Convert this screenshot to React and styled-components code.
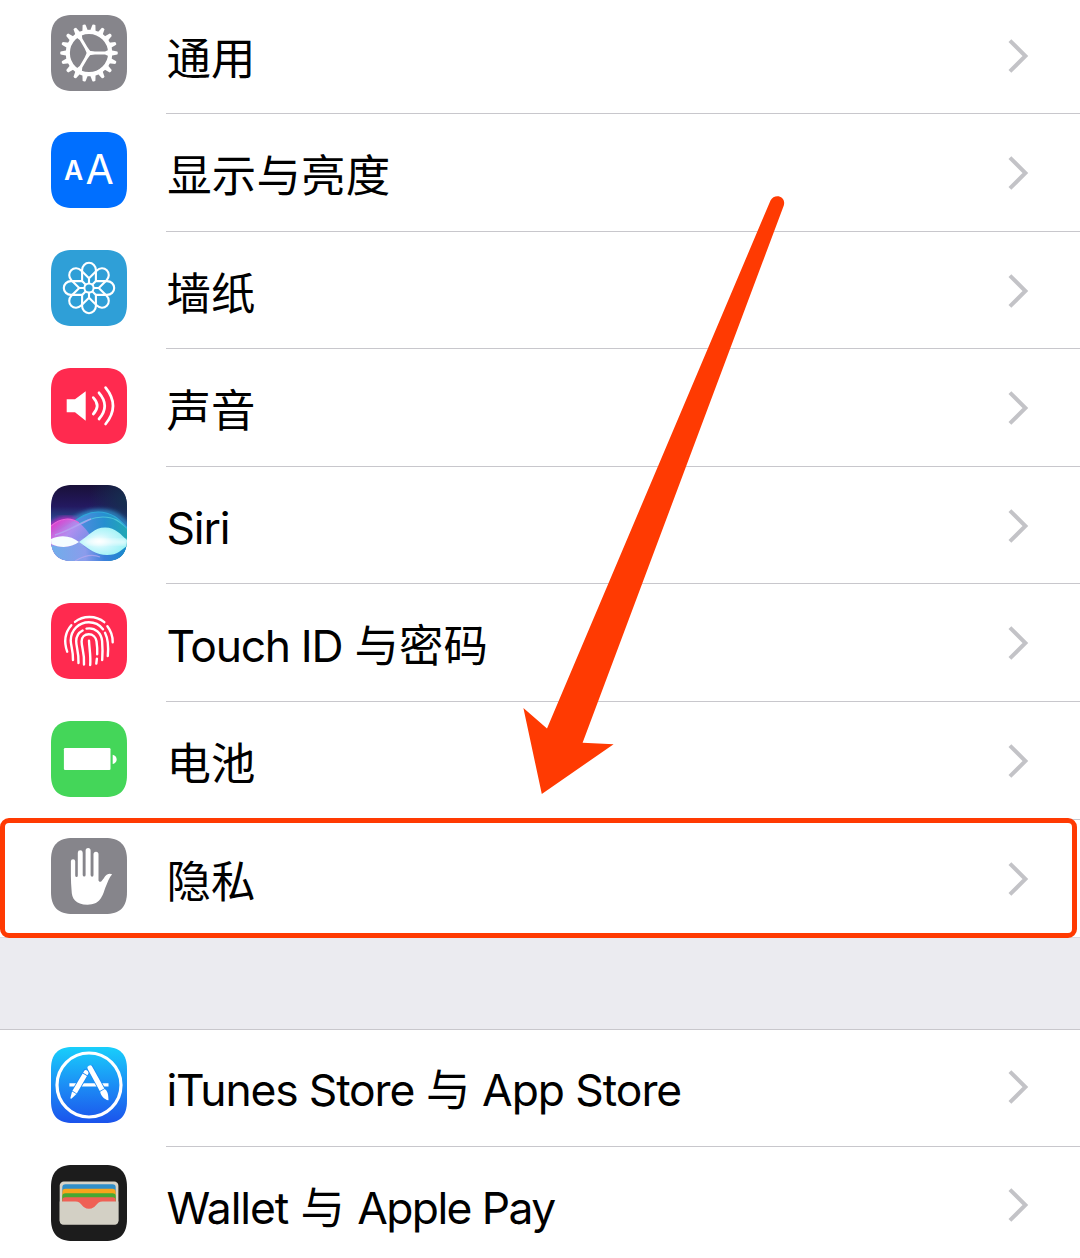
import React from "react";
import styled, { createGlobalStyle } from "styled-components";

const GlobalStyle = createGlobalStyle`
  * { box-sizing: border-box; }
  body {
    margin: 0;
    background: #fff;
    font-family: Inter, "Noto Sans CJK SC", sans-serif;
  }
`;

const Screen = styled.main`
  position: relative;
  width: 1080px;
  height: 1258px;
  overflow: hidden;
  display: flex;
  flex-direction: column;
  background: #fff;
`;

const Group = styled.section`
  display: flex;
  flex-direction: column;
  flex: none;
  margin-top: ${(p) => p.$shift || 0}px;
`;

const Spacer = styled.div`
  flex: none;
  height: 92.6px;
  background: #ebebf0;
  border-top: 1px solid #dcdbe0;
  border-bottom: 1px solid #c8c7cc;
`;

const Row = styled.div`
  position: relative;
  display: flex;
  align-items: flex-start;
  height: 117.6px;
  padding-left: 51.3px;
`;

const IconSlot = styled.div`
  flex: none;
  width: 76px;
  height: 76px;
  margin-top: ${(p) => p.$top}px;
`;

const Body = styled.div`
  flex: 1;
  display: flex;
  align-items: center;
  height: 117.6px;
  margin-left: 39.2px;
  padding-right: 51px;
  padding-bottom: ${(p) => p.$rise}px;
  border-bottom: 1px solid ${(p) => (p.$last ? "transparent" : "#c8c7cc")};
`;

const Label = styled.span`
  flex: 1;
  padding-top: 5px;
  font-size: 44.4px;
  line-height: 60px;
  color: #000;
  white-space: pre;
`;

const Latin = styled.span`
  letter-spacing: ${(p) => p.$track}px;
  padding-left: ${(p) => p.$lead || 0}px;
`;

const Han = styled.span`
  font-family: "Noto Sans CJK SC", sans-serif;
  letter-spacing: 0.2px;
  padding-left: ${(p) => p.$lead || 0}px;
`;

const Chevron = styled.svg`
  flex: none;
  width: 21px;
  height: 36px;
  margin-top: 2px;
`;

const Highlight = styled.div`
  position: absolute;
  left: 0;
  top: -2px;
  width: 1077px;
  height: 120px;
  border: 5px solid #ff3a02;
  border-radius: 9px;
`;

const ArrowMark = styled.svg`
  position: absolute;
  left: 0;
  top: 0;
  width: 1080px;
  height: 1258px;
  pointer-events: none;
`;

function Tile({ fill, children }) {
  return (
    <svg width="76" height="76" viewBox="0 0 76 76" fill="none">
      <path
        d="M22 0H54C69 0 76 7 76 22V54C76 69 69 76 54 76H22C7 76 0 69 0 54V22C0 7 7 0 22 0Z"
        fill={fill}
      />
      {children}
    </svg>
  );
}

function GearIcon() {
  const teeth = Array.from({ length: 18 }, (_, i) => (i * 360) / 18);
  return (
    <Tile fill="#86858b">
      <g transform="translate(38 38)" fill="#fff">
        {teeth.map((a) => (
          <path key={a} d="M22-2.8L28.4-1.5Q29.4 0 28.4 1.5L22 2.8Z" transform={`rotate(${a})`} />
        ))}
        <circle r="21.2" fill="none" stroke="#fff" strokeWidth="4.2" />
        {[0, 120, 240].map((a) => (
          <path key={a} d="M0-2.2L6-1.5H16L20-3.2V3.2L16 1.5H6L0 2.2Z" transform={`rotate(${a})`} />
        ))}
      </g>
    </Tile>
  );
}

const Glyph = styled.text`
  font-family: Inter, sans-serif;
  font-size: ${(p) => p.$size}px;
  font-weight: ${(p) => p.$weight};
  fill: #fff;
`;

function DisplayIcon() {
  return (
    <Tile fill="#006fff">
      <Glyph x="13" y="48.2" $size={26.4} $weight={600}>A</Glyph>
      <Glyph x="34.4" y="51.8" $size={41} $weight={400}>A</Glyph>
    </Tile>
  );
}

function WallpaperIcon() {
  return (
    <Tile fill="#2f9fd7">
      <g transform="translate(38 38)" stroke="#fff" strokeWidth="2.1" strokeLinejoin="round">
        {[0, 45, 90, 135, 180, 225, 270, 315].map((a) => (
          <path
            key={a}
            d="M-3.2-3.2L-6.9-6.9V-18A6.9 7.2 0 0 1 6.9-18V-6.9"
            transform={`rotate(${a})`}
          />
        ))}
        <circle r="4.6" fill="#2f9fd7" strokeWidth="2" />
      </g>
    </Tile>
  );
}

function SoundIcon() {
  return (
    <Tile fill="#ff2a4f">
      <path d="M15.7 31.3H24L34.7 23.3V52.7L24 44.2H15.7Z" fill="#fff" />
      <g stroke="#fff" strokeWidth="2.7" strokeLinecap="round">
        <path d="M42.3 29.6Q50 37.8 42.3 46" />
        <path d="M48 24.8Q59.4 37.8 48 51" />
        <path d="M54.6 19.6Q69.4 37.8 54.6 56" />
      </g>
    </Tile>
  );
}

function SiriIcon() {
  return (
    <svg width="76" height="76" viewBox="0 0 76 76" fill="none">
      <defs>
        <clipPath id="siriClip">
          <path d="M22 0H54C69 0 76 7 76 22V54C76 69 69 76 54 76H22C7 76 0 69 0 54V22C0 7 7 0 22 0Z" />
        </clipPath>
        <linearGradient id="siriSky" x1="0" y1="0" x2="0" y2="1">
          <stop offset="0" stopColor="#191038" />
          <stop offset="0.28" stopColor="#231960" />
          <stop offset="0.5" stopColor="#2b559c" />
        </linearGradient>
        <linearGradient id="siriSea" x1="0" y1="0" x2="1" y2="0">
          <stop offset="0" stopColor="#a06ae0" />
          <stop offset="0.35" stopColor="#548be0" />
          <stop offset="0.7" stopColor="#268fd0" />
          <stop offset="1" stopColor="#20a8b4" />
        </linearGradient>
        <linearGradient id="siriDeep" x1="0" y1="0" x2="1" y2="0">
          <stop offset="0" stopColor="#6faeea" />
          <stop offset="0.45" stopColor="#8b9cec" />
          <stop offset="0.7" stopColor="#3b80db" />
          <stop offset="1" stopColor="#1689cc" />
        </linearGradient>
        <linearGradient id="siriPink" x1="0" y1="34" x2="35" y2="70" gradientUnits="userSpaceOnUse">
          <stop offset="0" stopColor="#e52bc5" />
          <stop offset="0.45" stopColor="#c092f3" stopOpacity="0.8" />
          <stop offset="1" stopColor="#a18df0" stopOpacity="0.4" />
        </linearGradient>
        <radialGradient id="siriLens" cx="0.42" cy="0.5" r="0.6">
          <stop offset="0" stopColor="#fff" />
          <stop offset="0.45" stopColor="#c9f7fc" />
          <stop offset="1" stopColor="#9cf2f5" />
        </radialGradient>
        <radialGradient id="siriShade" cx="1" cy="0.2" r="0.5">
          <stop offset="0" stopColor="#15304f" />
          <stop offset="1" stopColor="#15304f" stopOpacity="0" />
        </radialGradient>
        <filter id="siriGlow" x="-20%" y="-50%" width="140%" height="200%">
          <feGaussianBlur stdDeviation="2" />
        </filter>
      </defs>
      <g clipPath="url(#siriClip)">
        <rect width="76" height="76" fill="url(#siriSky)" />
        <rect width="76" height="76" fill="url(#siriShade)" />
        <path d="M-2 46C15 46 26 27 47 27S69 34 79 44" stroke="#2d8cc8" strokeWidth="5" filter="url(#siriGlow)" />
        <path d="M-2 43C8 33 17 33 26 37" stroke="#b32cc0" strokeWidth="6" filter="url(#siriGlow)" />
        <path d="M0 48C17 46 28 27 47 27C61 27 68 34 76 43V76H0Z" fill="url(#siriSea)" />
        <path d="M0 51C19 46 34 32 52 32C63 32 68 36 76 43" stroke="#5ad6df" strokeWidth="1.2" opacity="0.7" />
        <path d="M0 48C17 46 28 27 47 27C61 27 68 34 76 43" stroke="#30a7d9" strokeWidth="1.2" />
        <path d="M0 41C9 33 20 32 28 38C38 45 44 57 50 76H0Z" fill="url(#siriPink)" />
        <path d="M0 41C9 33 20 32 28 38" stroke="#e666da" strokeWidth="1.2" />
        <path d="M4 50C18 46 28 39 40 34" stroke="#b6a5f2" strokeWidth="1.4" opacity="0.8" />
        <path d="M0 60C12 63 20 63 28 57C36 65 47 71 57 70S71 65 76 61V76H0Z" fill="url(#siriDeep)" />
        <path d="M24 76C34 70 42 69 49 72" stroke="#b9a9ef" strokeWidth="1.2" opacity="0.7" />
        <path d="M0 54C10 49 21 51 28 57C21 62 11 64 0 59Z" fill="#f5fdff" />
        <path d="M28 57C39 50 43 42.5 54 42.5C65 42.5 70 50 76 55V61C70 65 67 70 56 70C45 70 38 64 28 57Z" fill="url(#siriLens)" />
        <path d="M30 56.8C48 53 58 57 76 55V59C59 57 48 60 30 57.2Z" fill="#fff" filter="url(#siriGlow)" />
      </g>
    </svg>
  );
}

function TouchIdIcon() {
  return (
    <Tile fill="#ff2a4f">
      <g stroke="#fff" strokeWidth="2.4" strokeLinecap="round">
        <path d="M24 18.9C32 12.3 45 12.3 53.3 19.2" />
        <path d="M20.3 22.2C14 29.5 12.8 39 16.2 48.7" />
        <path d="M56.4 23.3C60 28 61.8 33 61.7 39.2" />
        <path d="M22 57C22.3 48 19.8 43 19.7 37.5C19.9 27 28 19.3 37.8 19.3C44.5 19.3 49 22.4 52 26.2" />
        <path d="M54 29.8C57.2 36 57.5 45 56.8 53" />
        <path d="M27.5 60C27.9 49 25.2 44.5 25.2 38.3C25.2 34 27.5 29.6 31.6 27.5" />
        <path d="M35.5 25.6C44.5 24 50.4 30.5 51.1 38C51.6 44 51.7 50 51.2 57" />
        <path d="M33 61.5C33.6 49 30.6 45 30.6 38.5C30.6 34 33.8 31.3 37.7 31.3C42 31.3 44.9 34.5 45.5 38.3C46.2 43 46.4 47 46.2 51.3" />
        <path d="M45.9 55.7L45.3 60.6" />
        <path d="M39.2 62C39.9 52 38.3 46 38 37.8" />
      </g>
    </Tile>
  );
}

function BatteryIcon() {
  return (
    <Tile fill="#44d659">
      <rect x="12.9" y="27" width="46.6" height="22" rx="1.2" fill="#fff" />
      <path d="M61.7 33.7C67 35 67 41.8 61.7 43Z" fill="#fff" />
    </Tile>
  );
}

function HandIcon() {
  return (
    <Tile fill="#86858b">
      <path
        d="M19.9 23.3A2.1 2.1 0 0 1 24.2 23.3V37.5Q24.4 39 25.5 39Q26.8 39 26.8 37.5V14.8A2.4 2.4 0 0 1 31.7 14.8V37Q31.8 38.6 33.2 38.6Q34.6 38.6 34.6 37V12.5A2.5 2.5 0 0 1 39.6 12.5V37Q39.7 38.8 41.1 38.8Q42.5 38.8 42.5 37V16.2A2.5 2.5 0 0 1 47.5 16.2V42.5Q48.2 44.5 50.2 43.4C52.4 41.7 53.2 38.7 55.7 36.8Q58.4 35.2 61.1 36.3C58.2 39.4 56.4 45 54.4 49.5C51.6 57.8 49.2 66.7 36.5 66.7C24.5 66.7 20.6 60.3 20.6 52.5Q19.9 45 19.9 38Z"
        fill="#fff"
      />
    </Tile>
  );
}

function AppStoreIcon() {
  return (
    <Tile fill="url(#storeBlue)">
      <defs>
        <linearGradient id="storeBlue" x1="0" y1="0" x2="0" y2="1">
          <stop offset="0" stopColor="#18cffb" />
          <stop offset="0.5" stopColor="#1c8ef5" />
          <stop offset="1" stopColor="#1b53ec" />
        </linearGradient>
      </defs>
      <circle cx="38" cy="38" r="32" stroke="#fff" strokeWidth="3.2" />
      <path d="M18.4 36.2H57.5V39.4H18.4Z" fill="#fff" />
      <g transform="translate(36.3 23.6) rotate(30.5)">
        <path d="M-3.4 0H3.4V27L0 33L-3.4 27Z" fill="#1c8af4" />
        <path d="M-2.5 2Q-2.5 0 0 0T2.5 2V4H-2.5ZM-2.5 4.9H2.5V25H-2.5ZM-2.5 25.8H2.5L.7 32L0 32.8L-.7 32Z" fill="#fff" />
      </g>
      <g transform="translate(37.8 18.8) rotate(-29)">
        <path d="M-3.4 1H3.4V31L0 38L-3.4 31Z" fill="#1c8af4" />
        <path d="M-2.5 2Q-2.5 0 0 0T2.5 2L2.6 27.3H-2.6ZM-2.6 28.1H2.6C4 31 3.6 34 .5 39.8C-3 36.5-3.8 31.5-2.6 28.1Z" fill="#fff" />
      </g>
    </Tile>
  );
}

function WalletIcon() {
  return (
    <Tile fill="#1c1c1c">
      <rect x="8.7" y="16.6" width="58.7" height="43" rx="4.2" fill="#d7d3c8" />
      <path d="M11.3 40V22.5Q11.3 19.3 14.5 19.3H61.5Q64.7 19.3 64.7 22.5V40Z" fill="#318fc9" />
      <path d="M11.3 40V27Q11.3 23.8 14.5 23.8H61.5Q64.7 23.8 64.7 27V40Z" fill="#f9a51b" />
      <path d="M11.3 40V31.4Q11.3 28.2 14.5 28.2H61.5Q64.7 28.2 64.7 31.4V40Z" fill="#48a832" />
      <path d="M11.3 40V35.4Q11.3 32.3 14.5 32.3H61.5Q64.7 32.3 64.7 35.4V45H11.3Z" fill="#ef6055" />
      <path
        d="M8.7 36.6H24.5C31 36.6 30.5 43.8 38 43.8S45 36.6 51.5 36.6H67.4V55.4Q67.4 59.6 63.2 59.6H12.9Q8.7 59.6 8.7 55.4Z"
        fill="#d3d0c5"
      />
    </Tile>
  );
}

function SettingRow({ icon: Icon, children, last, highlighted, iconTop = 18.6, rise = 0 }) {
  return (
    <Row>
      <IconSlot $top={iconTop}>
        <Icon />
      </IconSlot>
      <Body $last={last} $rise={rise}>
        <Label>{children}</Label>
        <Chevron viewBox="0 0 21 36" fill="none">
          <path d="M1.9 2.6L17.4 18L1.9 33.4" stroke="#c3c3c7" strokeWidth="4" />
        </Chevron>
      </Body>
      {highlighted && <Highlight />}
    </Row>
  );
}

export default function App() {
  return (
    <Screen>
      <GlobalStyle />
      <Group $shift={-3.6}>
        <SettingRow icon={GearIcon}><Han>通用</Han></SettingRow>
        <SettingRow icon={DisplayIcon} iconTop={18.4}><Han $lead={0.8}>显示与亮度</Han></SettingRow>
        <SettingRow icon={WallpaperIcon}><Han>墙纸</Han></SettingRow>
        <SettingRow icon={SoundIcon}><Han>声音</Han></SettingRow>
        <SettingRow icon={SiriIcon}><Latin $track={-1.1}>Siri</Latin></SettingRow>
        <SettingRow icon={TouchIdIcon} rise={1}>
          <Latin $track={-1.3}>Touch ID </Latin><Han $lead={1}>与密码</Han>
        </SettingRow>
        <SettingRow icon={BatteryIcon}><Han>电池</Han></SettingRow>
        <SettingRow icon={HandIcon} last highlighted><Han>隐私</Han></SettingRow>
      </Group>
      <Spacer />
      <Group>
        <SettingRow icon={AppStoreIcon} iconTop={17} rise={4}>
          <Latin $track={-1.15}>iTunes Store </Latin><Han $lead={0.6}>与</Han><Latin $track={-1.05}> App Store</Latin>
        </SettingRow>
        <SettingRow icon={WalletIcon} iconTop={17.6} rise={3} last>
          <Latin $track={-1.1}>Wallet </Latin><Han $lead={1}>与</Han><Latin $track={-1.6} $lead={1.2}> Apple Pay</Latin>
        </SettingRow>
      </Group>
      <ArrowMark viewBox="0 0 1080 1258">
        <path
          d="M541.8 794L523.4 708L547 728.5L770.5 200.5C774 193 786.5 195.5 783.8 205.5L582.6 742.7L613.6 744.2Z"
          fill="#ff3a02"
        />
      </ArrowMark>
    </Screen>
  );
}
